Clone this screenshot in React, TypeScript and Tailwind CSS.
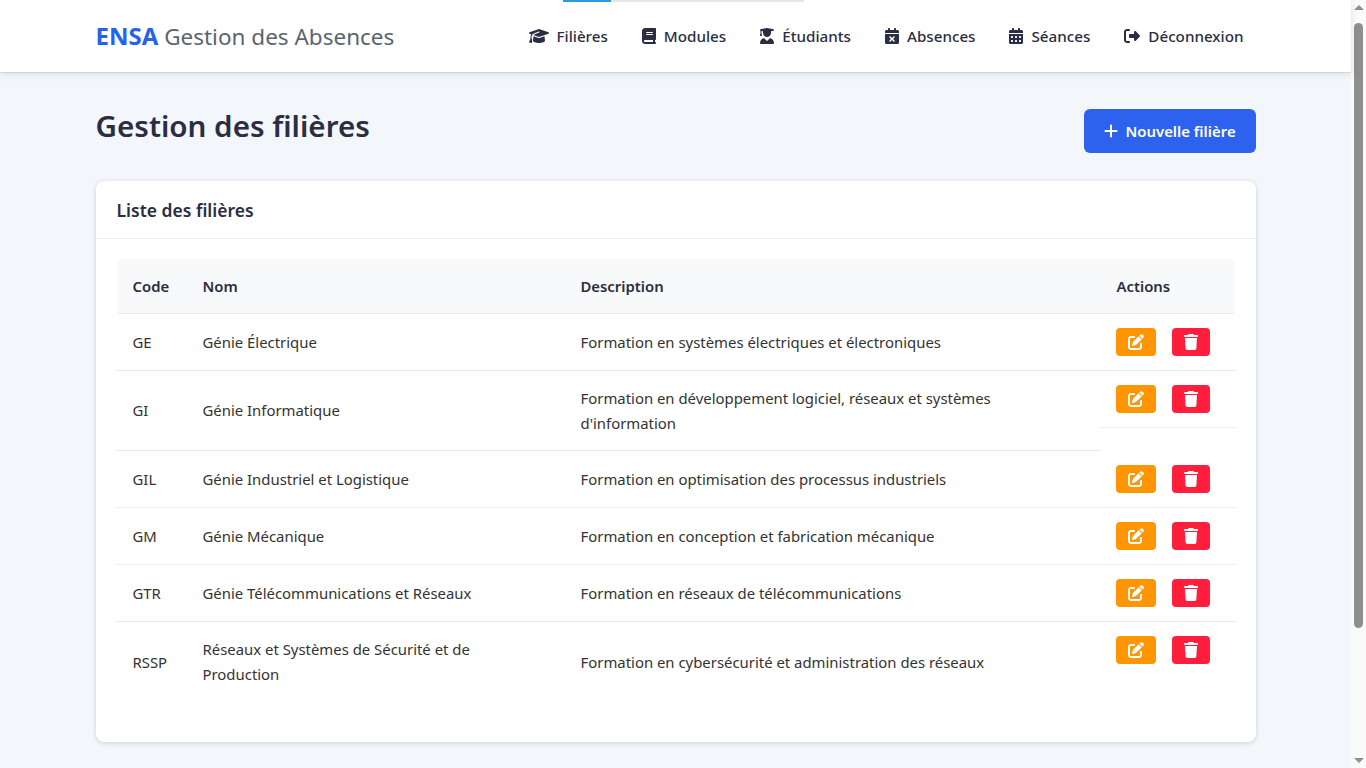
import {
  FaBook,
  FaCalendarDays,
  FaCalendarXmark,
  FaGraduationCap,
  FaPenToSquare,
  FaPlus,
  FaRightFromBracket,
  FaTrash,
  FaUserGraduate,
} from "react-icons/fa6";

const navItems = [
  { label: "Filières", icon: FaGraduationCap, iconClassName: "w-5" },
  { label: "Modules", icon: FaBook, iconClassName: "w-[14px]" },
  { label: "Étudiants", icon: FaUserGraduate, iconClassName: "w-[14px]" },
  { label: "Absences", icon: FaCalendarXmark, iconClassName: "w-[14px]" },
  { label: "Séances", icon: FaCalendarDays, iconClassName: "w-[14px]" },
  { label: "Déconnexion", icon: FaRightFromBracket, iconClassName: "w-4" },
];

const filieres = [
  { code: "GE", nom: "Génie Électrique", description: "Formation en systèmes électriques et électroniques" },
  {
    code: "GI",
    nom: "Génie Informatique",
    description: "Formation en développement logiciel, réseaux et systèmes d'information",
  },
  { code: "GIL", nom: "Génie Industriel et Logistique", description: "Formation en optimisation des processus industriels" },
  { code: "GM", nom: "Génie Mécanique", description: "Formation en conception et fabrication mécanique" },
  { code: "GTR", nom: "Génie Télécommunications et Réseaux", description: "Formation en réseaux de télécommunications" },
  {
    code: "RSSP",
    nom: "Réseaux et Systèmes de Sécurité et de Production",
    description: "Formation en cybersécurité et administration des réseaux",
  },
];

const thClassName = "px-4 pt-[15px] pb-[13px] border-b border-[#e9ecef] text-left text-[14.85px] font-semibold";
const tdClassName = "px-4 pt-[15px] pb-[13px]";

function Scrollbar() {
  return (
    <div className="flex h-screen w-[15px] shrink-0 flex-col items-center bg-[#fafafa]">
      <div className="mt-[5px] h-0 w-0 border-x-[5px] border-b-[5px] border-x-transparent border-b-[#8f8f8f]" />
      <div className="mt-[13px] h-[605px] w-[9px] rounded-full bg-[#8f8f8f]" />
      <div className="mt-auto mb-[5px] h-0 w-0 border-x-[5px] border-t-[5px] border-x-transparent border-t-[#8f8f8f]" />
    </div>
  );
}

function Navbar() {
  return (
    <header className="relative z-10 h-[72px] bg-white shadow-[0_1px_1px_rgba(0,0,0,0.08),0_2px_8px_rgba(0,0,0,0.1)]">
      <div className="ml-[95.5px] flex h-full w-[1160px] items-center justify-between">
        <div className="text-[22.5px] text-[#5c6470]">
          <span className="text-[24px] font-bold text-[#2563eb]">ENSA</span> Gestion des Absences
        </div>
        <nav className="flex items-center gap-[10px]">
          {navItems.map(({ label, icon: Icon, iconClassName }) => (
            <a key={label} className="flex items-center gap-2 px-3 pt-[2px] text-[15.2px] font-medium text-[#2b2d42]">
              <Icon className={`h-4 shrink-0 -translate-y-px ${iconClassName}`} aria-hidden />
              {label}
            </a>
          ))}
        </nav>
      </div>
    </header>
  );
}

function FiliereTable() {
  return (
    <table className="w-[1118px] table-fixed border-separate border-spacing-0">
      <thead className="text-[#2b2d42]">
        <tr className="bg-[#f8f9fa]">
          <th className={`${thClassName} w-[70px] rounded-tl-md`}>Code</th>
          <th className={`${thClassName} w-[378px]`}>Nom</th>
          <th className={`${thClassName} w-[536px]`}>Description</th>
          <th className={`${thClassName} w-[134px] rounded-tr-md`}>Actions</th>
        </tr>
      </thead>
      <tbody className="text-[14.9px] text-[#333]">
        {filieres.map((filiere, index) => {
          const border = index === filieres.length - 1 ? "" : "border-b border-[#e9ecef]";
          return (
            <tr key={filiere.code}>
              <td className={`${tdClassName} ${border}`}>{filiere.code}</td>
              <td className={`${tdClassName} ${border}`}>{filiere.nom}</td>
              <td className={`${tdClassName} ${border}`}>{filiere.description}</td>
              <td className={`flex gap-4 pt-[14px] pr-4 pb-[14px] pl-[15px] ${border}`}>
                <button type="button" className="flex h-7 w-10 items-center justify-center rounded bg-[#ff9500] text-white">
                  <FaPenToSquare className="h-4 w-4" aria-hidden />
                </button>
                <button type="button" className="flex h-7 w-[38px] items-center justify-center rounded bg-[#ff1f3d] text-white">
                  <FaTrash className="h-4 w-[14px]" aria-hidden />
                </button>
              </td>
            </tr>
          );
        })}
      </tbody>
    </table>
  );
}

export default function App() {
  return (
    <div className="flex h-screen overflow-hidden bg-[#f3f6fa] font-['Noto_Sans',sans-serif] text-[15px] leading-[25.6px]">
      <div className="relative min-w-0 flex-1">
        <Navbar />
        <div className="absolute top-0 left-[563px] z-20 flex h-[2px] w-[241px] bg-[#e5e7eb]">
          <div className="h-full w-12 bg-[#2a9bd8]" />
        </div>
        <main className="ml-[95.5px] w-[1160px] pt-[37px]">
          <div className="flex items-start justify-between">
            <h1 className="text-[29.6px] leading-[34px] font-semibold text-[#2b2d42]">Gestion des filières</h1>
            <button
              type="button"
              className="flex h-11 w-[172px] items-center gap-2 rounded-md bg-[#2d62ee] pt-[2px] pl-5 text-[14.9px] font-semibold text-white"
            >
              <FaPlus className="h-4 w-[14px] -translate-y-px" aria-hidden />
              Nouvelle filière
            </button>
          </div>
          <section className="mt-7 rounded-lg bg-white shadow-[0_1px_5px_rgba(0,0,0,0.16)]">
            <h2 className="border-b border-[#e9ecef] px-[21px] pt-[17px] pb-[14.5px] text-[17.5px] font-semibold text-[#2b2d42]">
              Liste des filières
            </h2>
            <div className="px-[21px] pt-5 pb-[41px]">
              <FiliereTable />
            </div>
          </section>
        </main>
      </div>
      <Scrollbar />
    </div>
  );
}
